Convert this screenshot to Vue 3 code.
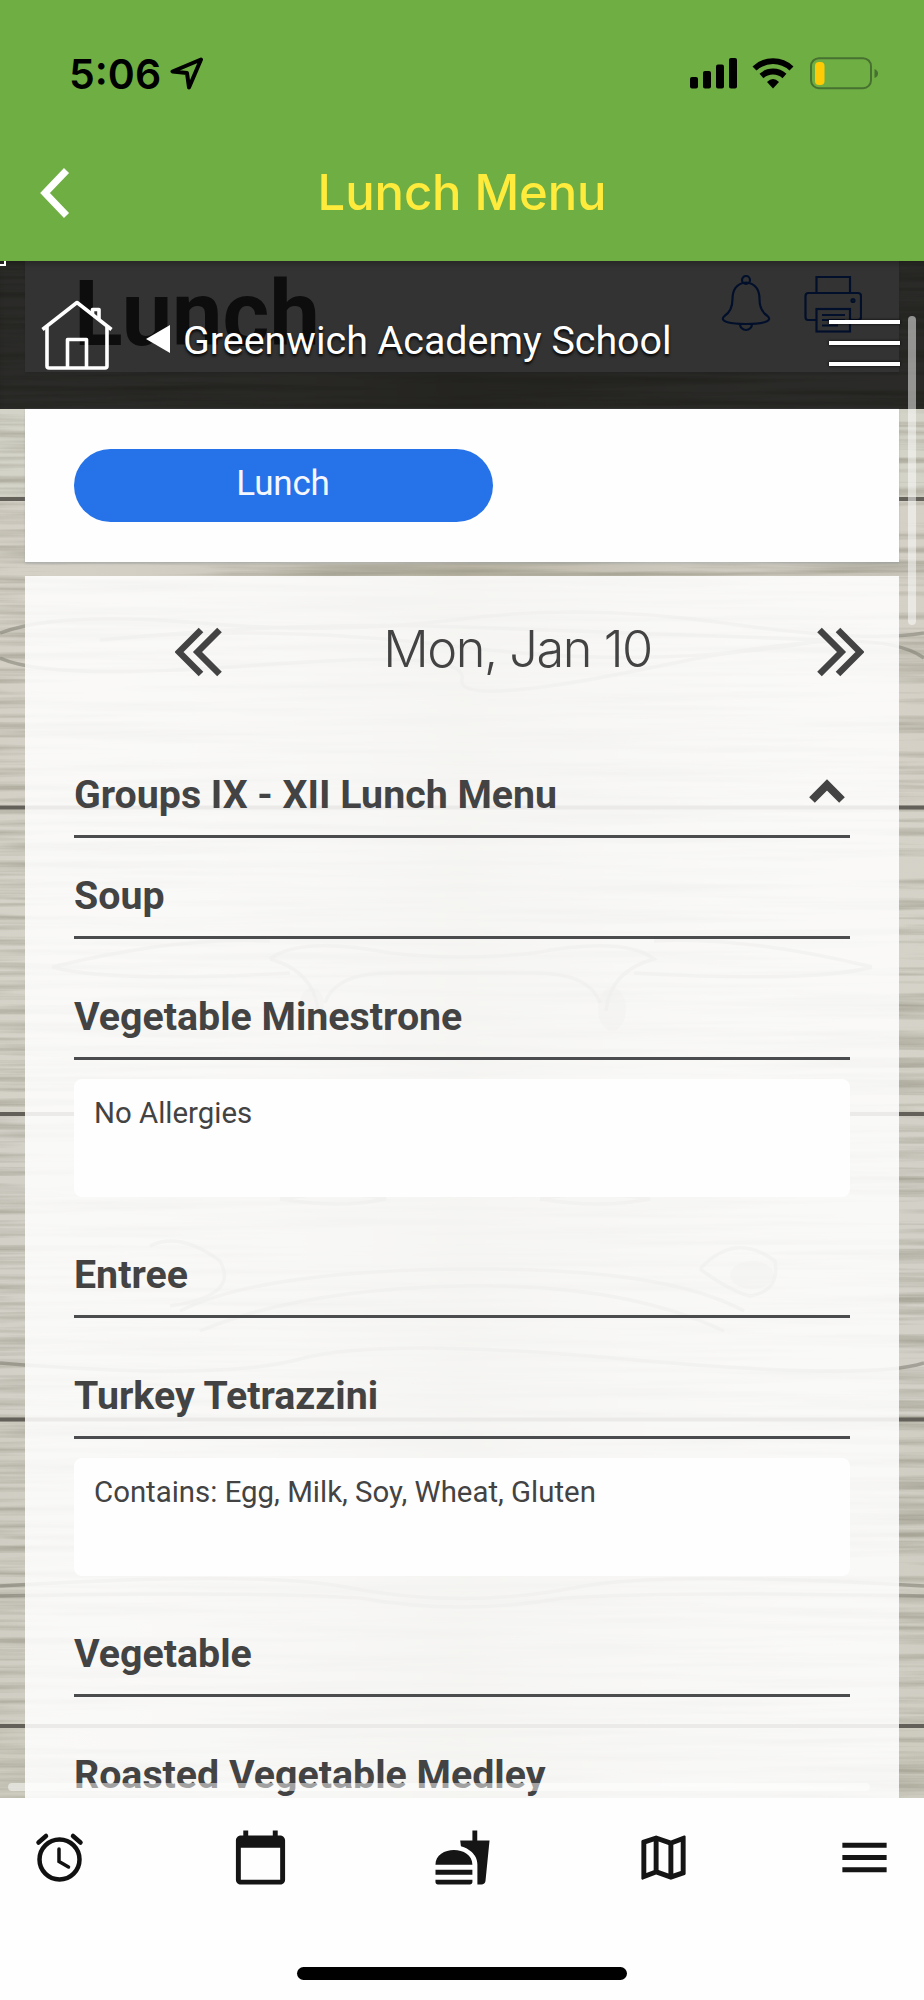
<script setup>
import { ref } from "vue";

const open = ref(true);

const sections = [
  {
    category: "Soup",
    dish: "Vegetable Minestrone",
    note: "No Allergies",
  },
  {
    category: "Entree",
    dish: "Turkey Tetrazzini",
    note: "Contains: Egg, Milk, Soy, Wheat, Gluten",
  },
  {
    category: "Vegetable",
    dish: "Roasted Vegetable Medley",
    note: "",
  },
];

// gaps between the planks, relative to the page area
const seams = [238, 546.5, 853, 1158.5, 1465];
const planks = [
  { y: 0, h: 238, color: "#cfcec2" },
  { y: 238, h: 308, color: "#d0cbc0" },
  { y: 546, h: 307, color: "#d0cdc2" },
  { y: 853, h: 305, color: "#cdcbc1" },
  { y: 1158, h: 307, color: "#cbc8bd" },
  { y: 1465, h: 72, color: "#c8c6b8" },
];
</script>

<template>
  <div class="phone">
    <header class="top">
      <div class="status">
        <span class="time">5:06</span>
        <svg class="location" width="34" height="34" viewBox="0 0 34 34">
          <path d="M31 2.500 L2.500 14.500 L17 16 L19 30.500 Z" />
        </svg>
        <svg class="signals" width="190" height="34" viewBox="0 0 190 34">
          <rect x="1" y="20" width="8" height="11.500" rx="2" />
          <rect x="14" y="14" width="8" height="17.500" rx="2" />
          <rect x="27" y="7.500" width="8" height="24" rx="2" />
          <rect x="40" y="1" width="8" height="30.500" rx="2" />
          <g class="arcs">
            <path d="M65.500 11.500 A27 27 0 0 1 102.500 11.500" />
            <path d="M72.500 19 A17 17 0 0 1 95.500 19" />
          </g>
          <path d="M78 25 Q84 19 90 25 L84 31.500 Z" />
          <rect class="shell" x="122" y="1.200" width="60" height="30" rx="8" />
          <rect class="charge" x="126" y="5" width="9.500" height="23" rx="4" />
          <path class="nub" d="M185.500 12 Q189 13.500 189 16.500 Q189 19.500 185.500 21 Z" />
        </svg>
      </div>
      <div class="titlebar">
        <svg class="back" width="32" height="52" viewBox="0 0 32 52">
          <path d="M26.500 3.500 L5 26 L26.500 48.500" />
        </svg>
        <h1>Lunch Menu</h1>
      </div>
    </header>

    <main class="page">
      <svg class="wood" width="924" height="1537" viewBox="0 0 924 1537">
        <defs>
          <filter id="grain" x="0" y="0" width="100%" height="100%">
            <feTurbulence type="fractalNoise" baseFrequency="0.004 0.13" numOctaves="4" seed="8" />
            <feColorMatrix values="0 0 0 0 0.35  0 0 0 0 0.34  0 0 0 0 0.27  1.800 0 0 0 -0.720" />
          </filter>
          <linearGradient id="shade">
            <stop offset="0" stop-color="#fff" stop-opacity="0.1" />
            <stop offset="0.5" stop-color="#8f8a70" stop-opacity="0.4" />
            <stop offset="1" stop-color="#fff" stop-opacity="0.1" />
          </linearGradient>
        </defs>
        <rect v-for="p in planks" :key="p.y" x="0" :y="p.y" width="924" :height="p.h" :fill="p.color" />
        <rect width="924" height="1537" fill="url(#shade)" />
        <rect width="924" height="1537" filter="url(#grain)" />
        <g class="rings">
          <path d="M0 372 Q60 350 200 362 T462 358 T724 362 T924 372" />
          <path d="M0 397 Q50 420 260 404 T462 418 T664 404 T924 397" />
          <path d="M100 379 Q300 360 462 366 T824 379 Q660 410 462 386 T100 379" />
          <path d="M52 706 Q180 675 270 680 M52 706 Q110 722 290 712 M872 706 Q744 675 654 680 M872 706 Q814 722 634 712" />
          <path d="M270 698 Q300 675 390 692 Q462 700 534 692 Q624 675 654 698 Q610 710 606 750 M270 698 Q314 710 318 750" />
          <path d="M325 742 Q335 712 390 712 H534 Q590 712 600 742" />
          <path d="M150 985 Q180 970 220 1000 Q240 1035 170 1045 M700 1008 Q735 970 775 1000 Q780 1030 750 1035 Q730 1030 700 1008" />
          <path d="M180 1050 Q260 1010 462 1008 T744 1050 M200 1070 Q300 1028 462 1025 T724 1070" />
          <path d="M280 938 Q340 928 386 938 Q340 948 280 938 M540 938 Q590 928 650 938 Q600 948 540 938" />
          <path d="M0 1102 Q220 1120 300 1098 T624 1098 T924 1102" />
          <path d="M0 1325 Q250 1310 340 1325 Q462 1350 584 1325 Q670 1310 924 1325" />
          <path d="M0 1335 Q250 1330 360 1337 Q462 1355 564 1337 Q670 1330 924 1335" />
        </g>
        <g class="knots">
          <ellipse cx="312" cy="742" rx="12" ry="15" />
          <ellipse cx="612" cy="748" rx="14" ry="22" />
          <ellipse cx="752" cy="1014" rx="22" ry="14" />
        </g>
        <path v-for="y in seams" :key="y" class="seam" :d="`M0 ${y} H924`" />
      </svg>

      <div class="content">
        <section class="panel heading">
          <h2>Lunch</h2>
          <div class="tools">
            <svg width="50" height="60" viewBox="0 0 50 60">
              <circle cx="25" cy="5" r="4" />
              <path d="M25 7.500 C15 8 11.500 16 11.500 24 C11.500 34 8 38 3.500 41 C-3 47 11 49 25 49 C39 49 53 47 46.500 41 C42 38 38.500 34 38.500 24 C38.500 16 35 8 25 7.500 Z" />
              <path d="M19 49 A6 6 0 1 0 31 49" />
            </svg>
            <svg width="58" height="60" viewBox="0 0 58 60">
              <path d="M12.500 18 V2 H46 V18" />
              <path d="M12.500 45 H4 Q1.500 45 1.500 42 V21 Q1.500 18 4.500 18 H54 Q57 18 57 21 V42 Q57 45 54 45 H46" />
              <rect x="12.500" y="34" width="33.500" height="22.500" />
              <path d="M18 40 H41 M18 45 H41 M18 50.500 H34" />
              <circle cx="49" cy="25.500" r="1.500" />
            </svg>
          </div>
        </section>

        <section class="panel tabs">
          <button class="pill">Lunch</button>
        </section>

        <section class="card">
          <div class="day">
            <svg width="48" height="50" viewBox="0 0 48 50">
              <path d="M26 3 L4 25 L26 47 M44.500 3 L22.500 25 L44.500 47" />
            </svg>
            <span>Mon, Jan 10</span>
            <svg width="48" height="50" viewBox="0 0 48 50">
              <path d="M3.500 3 L25.500 25 L3.500 47 M22 3 L44 25 L22 47" />
            </svg>
          </div>

          <div class="group" @click="open = !open">
            <h3>Groups IX - XII Lunch Menu</h3>
            <svg width="38" height="26" viewBox="0 0 38 26">
              <path d="M4 21 L19 6 L34 21" />
            </svg>
          </div>

          <template v-if="open">
            <div v-for="s in sections" :key="s.category" class="section">
              <h3 class="category">{{ s.category }}</h3>
              <h3 class="dish">{{ s.dish }}</h3>
              <p class="note">{{ s.note }}</p>
            </div>
          </template>
        </section>
      </div>

      <nav class="site">
        <svg class="home" width="72" height="72" viewBox="0 0 72 72">
          <path d="M1.500 29.500 L36 2.500 L70.500 29.500" />
          <path d="M6 27 V66 Q6 68 8 68 H64 Q66 68 66 66 V27" />
          <path d="M26.500 67 V39.500 H45.500 V67" />
          <path d="M51.500 14 V9.500 H58 V20" />
        </svg>
        <svg class="caret" width="24" height="28" viewBox="0 0 24 28">
          <path d="M24 0 V28 L0 14 Z" />
        </svg>
        <span class="school">Greenwich Academy School</span>
        <span class="burger"><i></i><i></i><i></i></span>
      </nav>
      <span class="corner"></span>
      <span class="scroll-y"></span>
      <span class="scroll-x"></span>
    </main>

    <footer class="bottom">
      <div class="icons">
        <svg viewBox="0 0 59 59">
          <g class="alarm">
            <circle cx="29.500" cy="31.500" r="20" />
            <path d="M8.500 14.500 L16 8 M43 8 L50.500 14.500" />
            <path class="hands" d="M29 21 V33.500 L38.500 39" />
          </g>
        </svg>
        <svg viewBox="0 0 24 24">
          <path d="M20 3h-1V1h-2v2H7V1H5v2H4c-1.100 0-2 .9-2 2v16c0 1.100.9 2 2 2h16c1.100 0 2-.9 2-2V5c0-1.100-.9-2-2-2zm0 18H4V8h16v13z" />
        </svg>
        <svg viewBox="0 0 24 24">
          <path d="M18.060 22.990h1.660c.84 0 1.530-.64 1.630-1.460L23 5.050h-5V1h-1.970v4.050h-4.970l.3 2.340c1.710.47 3.310 1.320 4.270 2.260 1.440 1.420 2.430 2.890 2.430 5.290v8.050zM1 21.990V21h15.030v.99c0 .55-.45 1-1.010 1H2.010c-.56 0-1.010-.45-1.010-1zm15.030-7c0-8-15.030-8-15.030 0h15.030zM1.020 17h15v2h-15z" />
        </svg>
        <svg viewBox="0 0 24 24">
          <path d="M20.500 3l-.16.03L15 5.100 9 3 3.360 4.900c-.21.07-.36.25-.36.480V20.500c0 .28.22.5.5.5l.16-.03L9 18.900l6 2.100 5.640-1.900c.21-.07.36-.25.36-.48V3.500c0-.28-.22-.5-.5-.5zM10 5.470l4 1.400v11.660l-4-1.400V5.470zm-5 .99l3-1.010v11.700l-3 1.160V6.460zm14 11.080l-3 1.010V6.860l3-1.160v11.840z" />
        </svg>
        <svg viewBox="0 0 24 24">
          <path d="M3 18h18v-2H3v2zm0-5h18v-2H3v2zm0-7v2h18V6H3z" />
        </svg>
      </div>
      <span class="indicator"></span>
    </footer>
  </div>
</template>

<style>
body {
  margin: 0;
}
</style>

<style scoped>
* {
  box-sizing: border-box;
}
h1,
h2,
h3,
p {
  margin: 0;
}
.phone {
  display: flex;
  flex-direction: column;
  width: 924px;
  height: 2000px;
  overflow: hidden;
  background-color: #fefefe;
  font-family: Roboto, "Liberation Sans", sans-serif;
  color: #434343;
}

/* green header */
.top {
  height: 261px;
  flex: none;
  background-color: #6fae43;
  font-family: Inter, "Liberation Sans", sans-serif;
}
.status {
  display: flex;
  align-items: center;
  height: 147px;
  padding: 0 45px 0 69px;
}
.time {
  font-size: 41px;
  font-weight: 560;
  color: #000;
  width: 101px;
  white-space: nowrap;
}
.location {
  fill: none;
  stroke: #000;
  stroke-width: 4;
  stroke-linejoin: round;
}
.signals {
  margin-left: auto;
}
.arcs {
  fill: none;
  stroke: #000;
  stroke-width: 5.800;
}
.shell {
  fill: none;
  stroke: #477130;
  stroke-width: 2;
}
.charge {
  fill: #ffcb05;
}
.nub {
  fill: #477130;
}
.titlebar {
  position: relative;
  display: flex;
  align-items: center;
  justify-content: center;
  height: 92px;
}
.back {
  position: absolute;
  left: 40px;
  top: 20px;
  fill: none;
  stroke: #fff;
  stroke-width: 7;
}
.titlebar h1 {
  font-size: 49px;
  font-weight: 530;
  letter-spacing: -0.1px;
  line-height: 92px;
  color: #ffeb3b;
}

/* scrolling page */
.page {
  position: relative;
  height: 1537px;
  flex: none;
  overflow: hidden;
}
.wood {
  position: absolute;
  top: 0;
  left: 0;
}
.rings {
  fill: none;
  stroke: #77756a;
  stroke-width: 3.500;
  opacity: 0.5;
}
.knots {
  fill: #77756a;
  opacity: 0.3;
}
.seam {
  stroke: #63605a;
  stroke-width: 4;
}
.content {
  position: relative;
  padding: 0 25px;
}
.panel {
  background-color: #fefefe;
  box-shadow: 0 2px 2px rgba(150, 160, 165, 0.4);
}
.heading {
  display: flex;
  justify-content: space-between;
  height: 111px;
  padding: 0 37px 0 49px;
  overflow: hidden;
}
.heading h2 {
  font-size: 90px;
  line-height: 108px;
  color: #444;
}
.tools {
  display: flex;
  gap: 33px;
  padding-top: 14px;
}
.tools svg {
  fill: none;
  stroke: #0a4ad0;
  stroke-width: 2.200;
}
.tabs {
  display: flex;
  margin-top: 36px;
  height: 154px;
  padding: 41px 49px 40px;
}
.pill {
  width: 419px;
  height: 73px;
  border: 0;
  border-radius: 37px;
  background-color: #2672e8;
  color: #f4f7ff;
  font-family: inherit;
  font-size: 35px;
  line-height: 70px;
  letter-spacing: -0.2px;
  padding: 0 1px 3px 0;
}
.card {
  margin-top: 14px;
  height: 1300px;
  padding: 0 49px;
  background-color: rgba(255, 255, 255, 0.87);
}
.day {
  display: flex;
  align-items: center;
  justify-content: space-between;
  height: 152px;
  margin: 0 -14px 0 101px;
}
.day span {
  font-family: Inter, sans-serif;
  font-size: 50.500px;
  font-weight: 350;
  letter-spacing: -1.500px;
  position: relative;
  top: -4px;
  left: -2px;
}
.day svg {
  fill: none;
  stroke: #434343;
  stroke-width: 6.500;
}
.group {
  display: flex;
  align-items: flex-start;
  justify-content: space-between;
  margin-top: 40px;
  height: 70px;
  border-bottom: 3px solid #4b4c4d;
}
.group svg {
  margin: 11px 4px 0 0;
  fill: none;
  stroke: #434343;
  stroke-width: 8;
}
h3 {
  font-size: 39.300px;
  line-height: 54px;
  font-weight: 700;
  white-space: nowrap;
}
.category,
.dish {
  height: 70px;
  border-bottom: 3px solid #4b4c4d;
}
.section {
  padding-top: 31px;
}
.section + .section {
  padding-top: 51px;
}
.dish {
  margin-top: 51px;
}
.note {
  margin-top: 19px;
  height: 118px;
  padding: 16px 20px;
  border-radius: 8px;
  background-color: #fefefe;
  font-size: 29.400px;
  line-height: 36px;
}

/* translucent bar laid over the page */
.site {
  position: absolute;
  top: 0;
  left: 0;
  display: flex;
  align-items: center;
  width: 924px;
  height: 148px;
  padding: 8px 24px 0 41px;
  background-color: rgba(0, 0, 0, 0.8);
  box-shadow: inset 0 6px 6px -3px rgba(0, 0, 0, 0.25);
  color: #fff;
}
.home {
  margin-bottom: 6px;
  fill: none;
  stroke: #fff;
  stroke-width: 3.600;
  stroke-linejoin: round;
}
.caret {
  margin-left: 33px;
  fill: #fff;
}
.school {
  margin-left: 13px;
  padding-top: 2px;
  font-size: 39.400px;
  text-shadow: 0 2px 3px #000;
  white-space: nowrap;
}
.burger {
  display: flex;
  flex-direction: column;
  gap: 17px;
  margin: 8px 0 0 auto;
}
.burger i {
  width: 71px;
  height: 4px;
  background-color: #fff;
  box-shadow: 0 0 3px #000;
}
.corner {
  position: absolute;
  top: 0;
  left: 0;
  width: 6px;
  height: 5px;
  border: solid #fff;
  border-width: 0 2px 2px 0;
}
.scroll-y {
  position: absolute;
  top: 55px;
  right: 8px;
  width: 8px;
  height: 309px;
  border-radius: 4px;
  background-color: rgba(255, 255, 255, 0.5);
}
.scroll-x {
  position: absolute;
  bottom: 7px;
  left: 8px;
  width: 862px;
  height: 8px;
  border-radius: 4px;
  background-color: rgba(255, 255, 255, 0.5);
}

/* bottom navigation */
.bottom {
  flex: 1;
  display: flex;
  flex-direction: column;
  align-items: center;
}
.icons {
  display: flex;
  justify-content: space-between;
  width: 864px;
  margin-top: 30px;
}
.icons svg {
  width: 59px;
  height: 59px;
  fill: #151515;
}
.icons .alarm {
  fill: none;
  stroke: #111;
  stroke-width: 4.500;
  stroke-linecap: round;
}
.icons .hands {
  stroke-width: 3.500;
}
.indicator {
  width: 330px;
  height: 13px;
  margin-top: 80px;
  border-radius: 7px;
  background-color: #000;
}
</style>
